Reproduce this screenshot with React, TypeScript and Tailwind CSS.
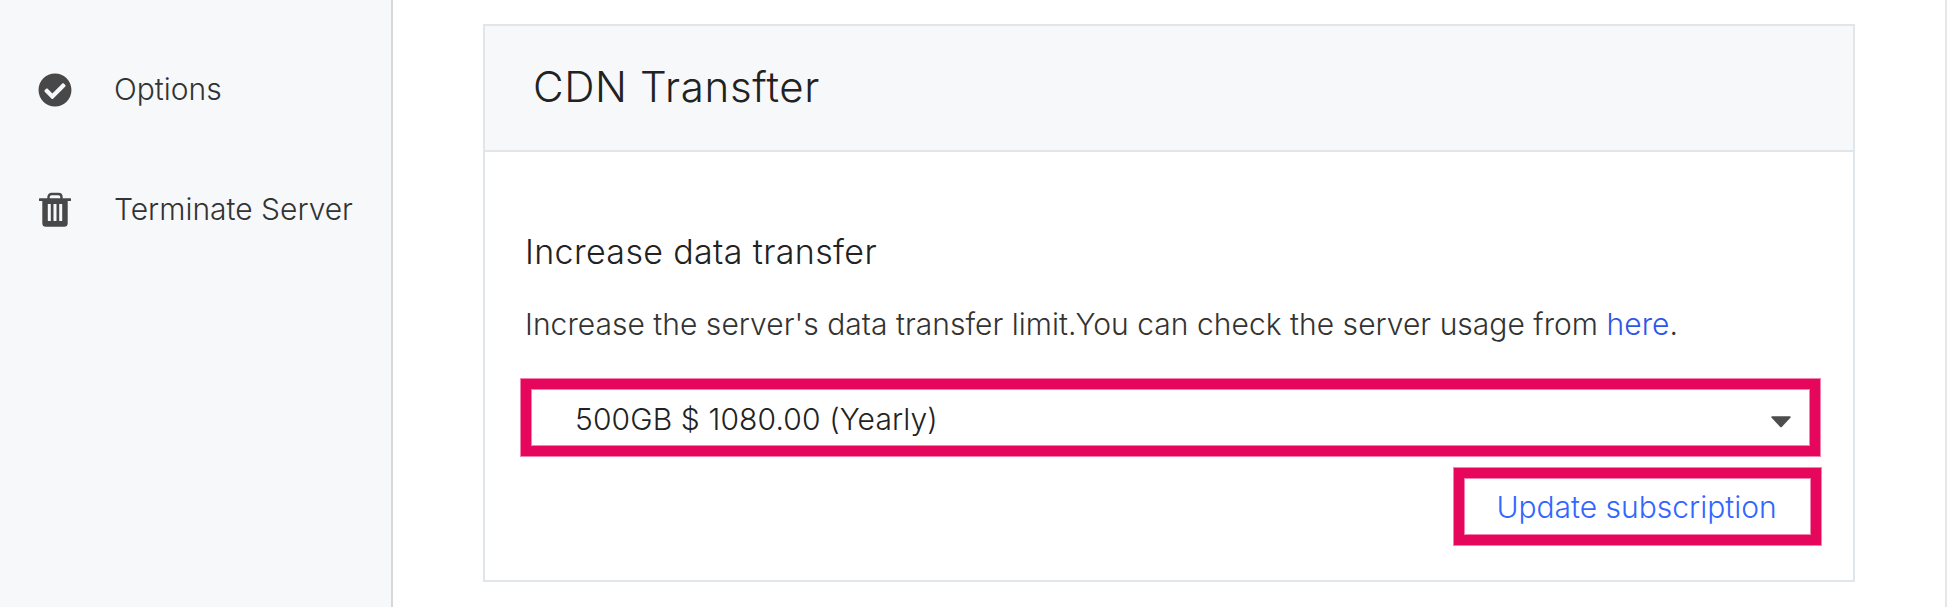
import React from 'react';
import { FaCheckCircle } from 'react-icons/fa';

const TrashIcon: React.FC = () => (
  <svg width="34" height="36" viewBox="0 0 34 36" fill="none">
    <path d="M10.5 7.2V5.2C10.5 3.2 11.8 2 13.6 2h6.8c1.8 0 3.1 1.2 3.1 3.2v2" stroke="#484848" strokeWidth="2.4" />
    <rect x="1" y="6.3" width="32" height="2.7" rx="0.5" fill="#484848" />
    <path d="M4.3 8h25.4v23.2a3.6 3.6 0 0 1-3.6 3.6H7.9a3.6 3.6 0 0 1-3.6-3.6z" fill="#484848" />
    <rect x="9.8" y="12" width="3" height="17" rx="0.5" fill="#f7f8fa" />
    <rect x="15.5" y="12" width="3" height="17" rx="0.5" fill="#f7f8fa" />
    <rect x="21.2" y="12" width="3" height="17" rx="0.5" fill="#f7f8fa" />
  </svg>
);

const menuItems = [
  { label: 'Options', icon: <FaCheckCircle className="w-[34px] h-[34px] text-[#484848]" /> },
  { label: 'Terminate Server', icon: <TrashIcon /> },
];

const App: React.FC = () => {
  return (
    <div className="flex w-[1947px] h-[607px] overflow-hidden bg-white font-['Inter',sans-serif] font-light text-[30px] text-[#333333]">
      {/* Sidebar */}
      <aside className="w-[393px] shrink-0 pt-[30px] bg-[#f7f8fa] border-r-2 border-[#d6d7d9]">
        {menuItems.map(item => (
          <a key={item.label} href="#" className="flex items-center h-[120px] pl-[38px] gap-[42px] whitespace-nowrap">
            {item.icon}
            <span className="pb-0.5">{item.label}</span>
          </a>
        ))}
      </aside>

      <main className="flex-1 pt-6 pl-[90px] border-r-2 border-[#e6e6e6]">
        <section className="w-[1372px] h-[558px] border-2 border-[#e1e6ea]">
          <header className="flex items-center h-[126px] pl-[48px] pb-1 bg-[#f7f8fa] border-b-2 border-[#e1e6ea]">
            <h1 className="text-[42px] tracking-[0.65px] text-[#222222]">CDN Transfter</h1>
          </header>

          <div className="pl-[36px] pr-[32px] pt-[76px]">
            <h2 className="pl-1 text-[34px] leading-[48px] tracking-[0.35px] text-[#222222]">Increase data transfer</h2>
            <p className="pl-1 mt-6 leading-[48px] tracking-[0.03px] whitespace-nowrap">
              Increase the server's data transfer limit.You can check the server usage from{' '}
              <a href="#" className="text-[#2f55e8]">here</a>.
            </p>

            {/* Plan picker */}
            <button
              type="button"
              className="flex items-center justify-between w-[1299px] h-[77px] mt-[31px] pt-1 pl-[44px] pr-[19px] border-[10px] border-[#e6075d] ring-1 ring-[#e6075d]/50 inset-ring-1 inset-ring-[#e6075d]/50 text-[#222222]"
            >
              <span className="tracking-[0.13px]">500GB $ 1080.00 (Yearly)</span>
              <svg width="20" height="12" viewBox="0 0 20 12" className="mt-1">
                <path d="M1.2 0.3h17.6c1 0 1.2 0.9 0.6 1.5L11 10.8c-0.6 0.7-1.4 0.7-2 0L0.6 1.8C0 1.2 0.2 0.3 1.2 0.3z" fill="#4d4d4d" />
              </svg>
            </button>

            <div className="flex w-[1300px] justify-end mt-3">
              <button
                type="button"
                className="w-[367px] h-[77px] pt-0.5 pr-0.5 border-[10px] border-[#e6075d] ring-1 ring-[#e6075d]/50 inset-ring-1 inset-ring-[#e6075d]/50 text-[#3366ff]"
              >
                Update subscription
              </button>
            </div>
          </div>
        </section>
      </main>
    </div>
  );
};

export default App;
